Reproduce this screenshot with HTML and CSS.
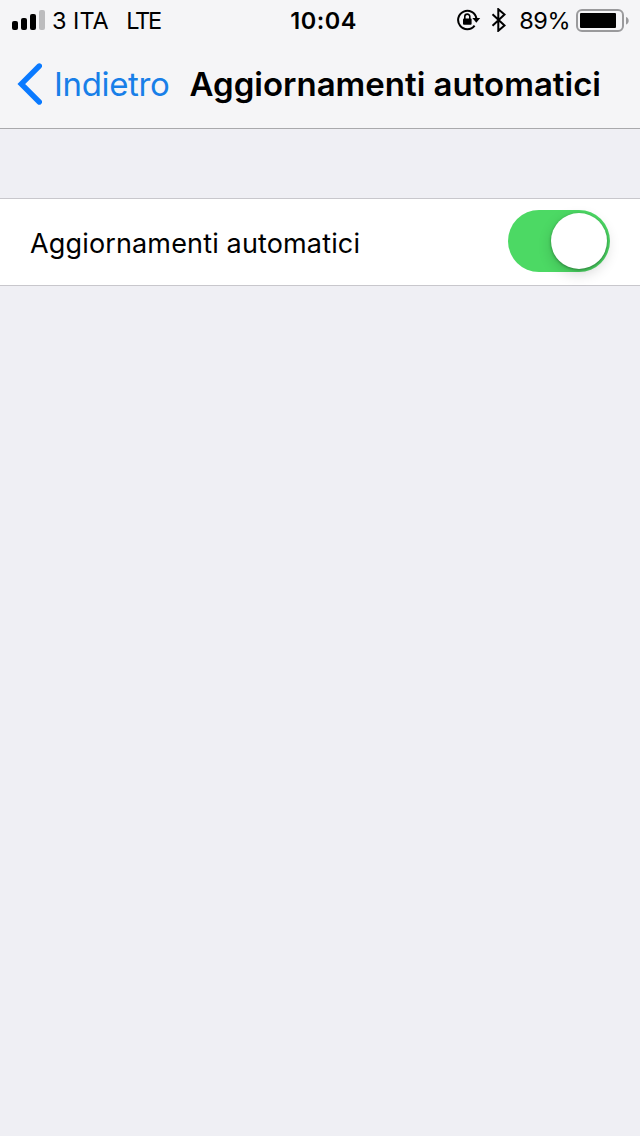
FILE: index.html
```html
<!DOCTYPE html>
<html lang="it">
<head>
  <meta charset="UTF-8" />
  <meta name="viewport" content="width=device-width, initial-scale=1.0"/>
  <title>Aggiornamenti automatici</title>
  <link rel="stylesheet" href="styles.css">
</head>
<body>
  <header class="header">
    <div class="status-bar">
      <div class="status-left">
        <svg class="signal" width="33" height="20" viewBox="0 0 33 20">
          <rect x="0" y="11" width="6" height="9" rx="2"/>
          <rect x="9" y="8" width="6" height="12" rx="2"/>
          <rect x="18" y="4" width="6" height="16" rx="2"/>
          <rect x="27" y="0" width="6" height="20" rx="2" fill="#bcbcbe"/>
        </svg>
        <span class="carrier">3 ITA</span>
        <span class="network">LTE</span>
      </div>
      <span class="time">10:04</span>
      <div class="status-right">
        <svg class="rotation" width="24" height="22" viewBox="0 0 24 22">
          <path d="M17.6 16.6A9.2 9.2 0 1 1 19.4 9.5" fill="none" stroke="#000" stroke-width="2"/>
          <path d="M15.4 9h7.8l-3.9 4.8z"/>
          <rect x="6" y="9.5" width="8.6" height="6.2" rx="1"/>
          <path d="M7.8 10V7.6a2.5 2.5 0 0 1 5 0V10" fill="none" stroke="#000" stroke-width="1.6"/>
        </svg>
        <svg class="bluetooth" width="16" height="24" viewBox="0 0 16 24">
          <path d="M1.5 6.3l12 11.2-6.2 5.3V1.2l6.2 5.3-12 11.2" fill="none" stroke="#000" stroke-width="2"/>
        </svg>
        <span class="percent">89%</span>
        <svg class="battery" width="53" height="24" viewBox="0 0 53 24">
          <rect x="1" y="1" width="46" height="21" rx="5" fill="none" stroke="#9a9a9c" stroke-width="2"/>
          <rect x="4" y="4" width="36" height="15" rx="1"/>
          <path d="M50 8c3.6 1.2 3.6 6.4 0 7.6z" fill="#9a9a9c"/>
        </svg>
      </div>
    </div>
    <div class="nav-bar">
      <a class="back" href="#">
        <svg width="25" height="42" viewBox="0 0 25 42">
          <path d="M22.3 3L4.3 21L22.3 39" fill="none" stroke="#0a7aff" stroke-width="5.4" stroke-linecap="round" stroke-linejoin="miter"/>
        </svg>
        <span>Indietro</span>
      </a>
      <h1>Aggiornamenti automatici</h1>
    </div>
  </header>

  <main class="settings">
    <label class="row">
      <span class="row-label">Aggiornamenti automatici</span>
      <input class="switch" type="checkbox" checked>
    </label>
  </main>
</body>
</html>
```
FILE: styles.css
```css
body {
  margin: 0;
  min-height: 1136px;
  background-color: #efeff4;
  font-family: Inter, "Liberation Sans", sans-serif;
  color: #000;
}
.header {
  height: 128px;
  background-color: #f5f5f7;
  border-bottom: 1px solid #a9a9ac;
}
.status-bar {
  display: grid;
  grid-template-columns: 278px 91px 271px;
  align-items: center;
  height: 41px;
  font-size: 23.5px;
  line-height: 42px;
}
.status-left,
.status-right {
  display: flex;
  align-items: center;
}
.status-left {
  padding-left: 12px;
}
.signal {
  margin-bottom: 3px;
}
.carrier {
  margin-left: 7px;
  letter-spacing: 0;
}
.network {
  margin-left: 17.5px;
  letter-spacing: -2.3px;
}
.time {
  text-align: center;
  font-weight: 600;
  letter-spacing: 0.5px;
}
.status-right {
  justify-content: flex-end;
  padding-right: 11px;
}
.rotation {
  margin-bottom: 2px;
}
.bluetooth {
  margin-left: 10px;
  margin-bottom: 2px;
}
.percent {
  margin-left: 12px;
  letter-spacing: -0.5px;
}
.battery {
  margin-left: 6px;
}
.nav-bar {
  display: flex;
  align-items: center;
  height: 85px;
  padding-left: 17px;
}
.back {
  display: flex;
  align-items: center;
  gap: 12px;
  width: 172.5px;
  color: #187fe8;
  font-size: 33px;
  letter-spacing: -0.35px;
  text-decoration: none;
}
h1 {
  margin: 0;
  font-size: 33px;
  font-weight: 600;
  letter-spacing: 0;
  white-space: nowrap;
}
.settings {
  padding-top: 69px;
}
.row {
  display: flex;
  align-items: center;
  justify-content: space-between;
  height: 86px;
  padding: 0 30px;
  background-color: #fff;
  border-top: 1px solid #c8c7cc;
  border-bottom: 1px solid #c8c7cc;
}
.row-label {
  padding-top: 3px;
  font-size: 27px;
  letter-spacing: 0.15px;
  white-space: nowrap;
}
.switch {
  appearance: none;
  display: flex;
  align-items: center;
  justify-content: flex-end;
  box-sizing: border-box;
  width: 102px;
  height: 62px;
  margin: 0 0 2px;
  padding: 3px;
  border-radius: 31px;
  background-color: #4cd964;
}
.switch::before {
  content: "";
  width: 56px;
  height: 56px;
  border-radius: 50%;
  background-color: #fff;
  box-shadow: 0 1px 3px rgba(0, 0, 0, 0.35), 0 5px 14px rgba(0, 0, 0, 0.16);
}
```
